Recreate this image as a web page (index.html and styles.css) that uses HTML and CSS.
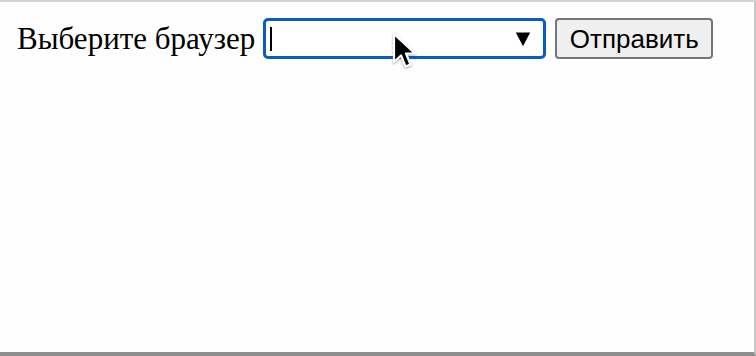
FILE: index.html
```html
<!DOCTYPE html>
<html lang="ru">
<head>
<meta charset="utf-8">
<link rel="stylesheet" href="styles.css">
</head>
<body>
<div class="frame">
  <form class="row">
    <label class="label">Выберите браузер</label>
    <div class="select">
      <span class="caret"></span>
      <span class="arrow">▼</span>
      <svg class="pointer" width="30" height="42" viewBox="0 0 30 42">
        <path d="M4 3 L4 31 L11 24.5 L15.5 35.5 L20.5 33.5 L16 22.5 L25 22.5 Z" fill="#000" stroke="#fff" stroke-width="2.2" stroke-linejoin="round" style="filter: drop-shadow(0 1px 1px rgba(0,0,0,0.35))"/>
      </svg>
    </div>
    <button type="button" class="btn">Отправить</button>
  </form>
</div>
</body>
</html>
```
FILE: styles.css
```css
html, body {
  margin: 0;
  padding: 0;
  background: #fefefe;
}
.frame {
  width: 756px;
  height: 356px;
  box-sizing: border-box;
  border-top: 2px solid #d5d5d5;
  border-right: 2px solid #c6c6c6;
  border-bottom: 4px solid #8e8e8e;
  padding: 16px 0 0 17px;
}
.row {
  display: flex;
  align-items: center;
  margin: 0;
}
.label {
  font-family: "Liberation Serif", "Times New Roman", serif;
  font-size: 31px;
  color: #000;
  margin-right: 8px;
  line-height: 1;
}
.select {
  position: relative;
  width: 283px;
  height: 41px;
  box-sizing: border-box;
  border: 3px solid #0a5bc4;
  border-radius: 5px;
  background: #fff;
  margin-right: 9px;
}
.caret {
  position: absolute;
  left: 4px;
  top: 6px;
  width: 2px;
  height: 24px;
  background: #000;
}
.arrow {
  position: absolute;
  right: 13px;
  top: 8px;
  font-family: "DejaVu Sans", sans-serif;
  font-size: 18px;
  line-height: 1;
  color: #000;
  transform: scaleX(1.05);
}
.pointer {
  position: absolute;
  z-index: 2;
  overflow: visible;
  left: 124px;
  top: 10px;
}
.btn {
  width: 158px;
  height: 41px;
  box-sizing: border-box;
  border: 2px solid #767676;
  border-radius: 4px;
  background: #efefef;
  font-family: "Liberation Sans", Arial, sans-serif;
  font-size: 26px;
  color: #000;
  padding: 0;
  line-height: 1;
}
```
